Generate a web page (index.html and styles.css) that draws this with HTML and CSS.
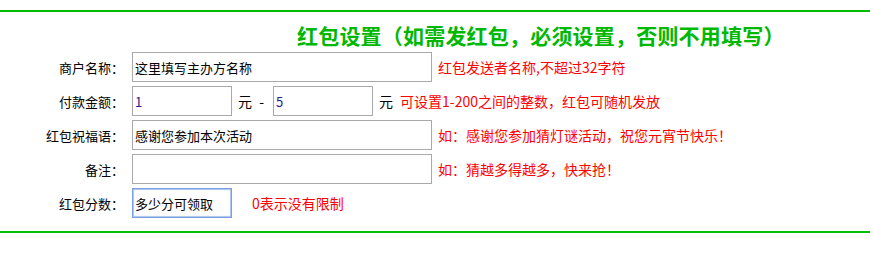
FILE: index.html
```html
<!DOCTYPE html>
<html lang="zh-CN">
<head>
  <meta charset="UTF-8" />
  <title>红包设置</title>
  <link rel="stylesheet" href="styles.css">
</head>
<body>
  <div class="hb-box">
    <div class="hb-title">红包设置（如需发红包，必须设置，否则不用填写）</div>

    <div class="hb-row">
      <label class="hb-label">商户名称：</label>
      <input type="text" class="ipt ipt-long" value="这里填写主办方名称" />
      <span class="tip">红包发送者名称,不超过32字符</span>
    </div>

    <div class="hb-row">
      <label class="hb-label">付款金额：</label>
      <input type="text" class="ipt ipt-short ipt-num" value="1" />
      <span class="unit unit-dash">元 -</span>
      <input type="text" class="ipt ipt-short ipt-num" value="5" />
      <span class="unit">元</span>
      <span class="tip tip-near">可设置1-200之间的整数，红包可随机发放</span>
    </div>

    <div class="hb-row">
      <label class="hb-label">红包祝福语：</label>
      <input type="text" class="ipt ipt-long" value="感谢您参加本次活动" />
      <span class="tip">如：感谢您参加猜灯谜活动，祝您元宵节快乐！</span>
    </div>

    <div class="hb-row">
      <label class="hb-label">备注：</label>
      <input type="text" class="ipt ipt-long" value="" />
      <span class="tip">如：猜越多得越多，快来抢！</span>
    </div>

    <div class="hb-row">
      <label class="hb-label">红包分数：</label>
      <input type="text" class="ipt ipt-short ipt-focus" value="多少分可领取" />
      <span class="tip tip-far">0表示没有限制</span>
    </div>
  </div>
</body>
</html>
```

FILE: styles.css
```css
body {
  margin: 0;
  padding-top: 10px;
  font-family: "Noto Sans CJK SC", sans-serif;
  font-size: 13px;
  color: #000;
  background: #fff;
}
.hb-box {
  border-top: 2px solid #00bb00;
  border-bottom: 2px solid #00bb00;
  padding: 11px 0 13px;
}
.hb-title {
  padding-left: 297px;
  font-size: 21px;
  line-height: 24px;
  font-weight: bold;
  color: #00b800;
  margin-bottom: 5px;
  white-space: nowrap;
  letter-spacing: 0.2px;
}
.hb-row {
  display: flex;
  align-items: center;
  height: 30px;
  margin-bottom: 4px;
  white-space: nowrap;
}
.hb-row:last-child {
  margin-bottom: 0;
}
.hb-label {
  width: 124px;
  margin-right: 8px;
  text-align: right;
  font-size: 13px;
}
.ipt {
  box-sizing: border-box;
  height: 30px;
  border: 1px solid #a9a9a9;
  padding: 0 2px;
  font-family: "Noto Sans CJK SC", sans-serif;
  font-size: 13px;
  color: #000;
  outline: none;
  margin: 0;
}
.ipt-long {
  width: 300px;
}
.ipt-short {
  width: 100px;
}
.ipt-num {
  color: #2a1a8a;
}
.ipt-focus {
  border-color: #7a9ee0;
  box-shadow: 0 0 1px 1px #a9c2ee inset;
}
.unit {
  margin: 0 7px 0 6px;
  font-size: 14px;
}
.unit-dash {
  margin-right: 9px;
  word-spacing: 4px;
}
.tip {
  margin-left: 6px;
  color: #ff0000;
  font-size: 14px;
}
.tip-near {
  margin-left: 0;
}
.tip-far {
  margin-left: 20px;
}
```
